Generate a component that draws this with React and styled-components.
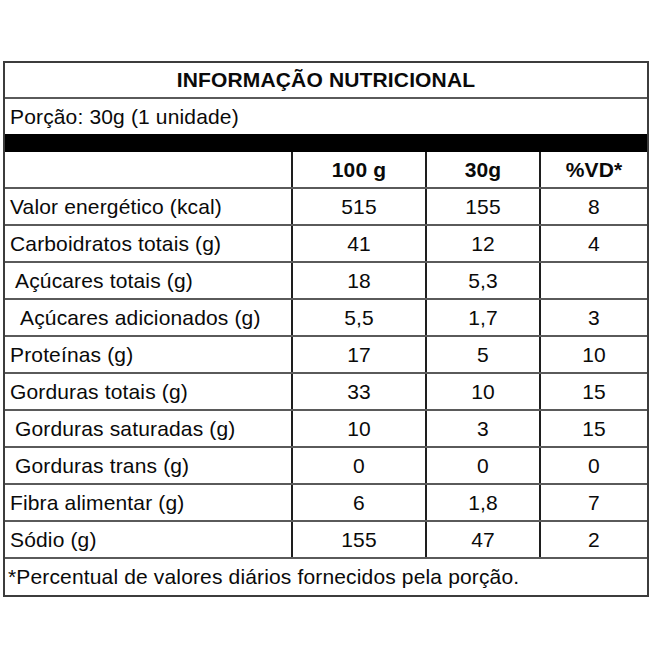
import React from 'react';
import styled, { createGlobalStyle } from 'styled-components';

const GlobalStyle = createGlobalStyle`
  html, body {
    margin: 0;
    padding: 0;
    background: #fff;
  }
  body {
    font-family: "Liberation Sans", Arial, sans-serif;
    color: #0a0a0a;
  }
`;

const Page = styled.div`
  padding: 61px 0 0 3px;
`;

const Table = styled.div`
  width: 646px;
  box-sizing: border-box;
  border: 2px solid #3c3c3c;
  font-size: 21px;
  letter-spacing: 0.15px;
`;

const Title = styled.div`
  height: 36px;
  box-sizing: border-box;
  border-bottom: 2px solid #5a5a5a;
  display: flex;
  align-items: center;
  justify-content: center;
  font-weight: bold;
`;

const Portion = styled.div`
  height: 35px;
  display: flex;
  align-items: center;
  padding-left: 5px;
`;

const Band = styled.div`
  height: 18px;
  background: #000;
`;

const Row = styled.div`
  display: grid;
  grid-template-columns: 286px 134px 114px 108px;
  height: 37px;
  box-sizing: border-box;
  border-bottom: 2px solid #5a5a5a;
`;

const Label = styled.div`
  display: flex;
  align-items: center;
  padding-left: ${p => 5 + (p.$indent || 0) * 5}px;
  white-space: nowrap;
`;

const Cell = styled.div`
  display: flex;
  align-items: center;
  justify-content: center;
  border-left: 2px solid #1e1e1e;
  font-weight: ${p => (p.$bold ? 'bold' : 'normal')};
`;

const Footer = styled.div`
  height: 36px;
  display: flex;
  align-items: center;
  padding-left: 3px;
  white-space: nowrap;
`;

const rows = [
  { name: 'Valor energético (kcal)', a: '515', b: '155', vd: '8' },
  { name: 'Carboidratos totais (g)', a: '41', b: '12', vd: '4' },
  { name: 'Açúcares totais (g)', a: '18', b: '5,3', vd: '', indent: 1 },
  { name: 'Açúcares adicionados (g)', a: '5,5', b: '1,7', vd: '3', indent: 2 },
  { name: 'Proteínas (g)', a: '17', b: '5', vd: '10' },
  { name: 'Gorduras totais (g)', a: '33', b: '10', vd: '15' },
  { name: 'Gorduras saturadas (g)', a: '10', b: '3', vd: '15', indent: 1 },
  { name: 'Gorduras trans (g)', a: '0', b: '0', vd: '0', indent: 1 },
  { name: 'Fibra alimentar (g)', a: '6', b: '1,8', vd: '7' },
  { name: 'Sódio (g)', a: '155', b: '47', vd: '2' },
];

export default function App() {
  return (
    <Page>
      <GlobalStyle />
      <Table>
        <Title>INFORMAÇÃO NUTRICIONAL</Title>
        <Portion>Porção: 30g (1 unidade)</Portion>
        <Band />
        <Row>
          <Label />
          <Cell $bold>100 g</Cell>
          <Cell $bold>30g</Cell>
          <Cell $bold>%VD*</Cell>
        </Row>
        {rows.map(r => (
          <Row key={r.name}>
            <Label $indent={r.indent}>{r.name}</Label>
            <Cell>{r.a}</Cell>
            <Cell>{r.b}</Cell>
            <Cell>{r.vd}</Cell>
          </Row>
        ))}
        <Footer>*Percentual de valores diários fornecidos pela porção.</Footer>
      </Table>
    </Page>
  );
}
